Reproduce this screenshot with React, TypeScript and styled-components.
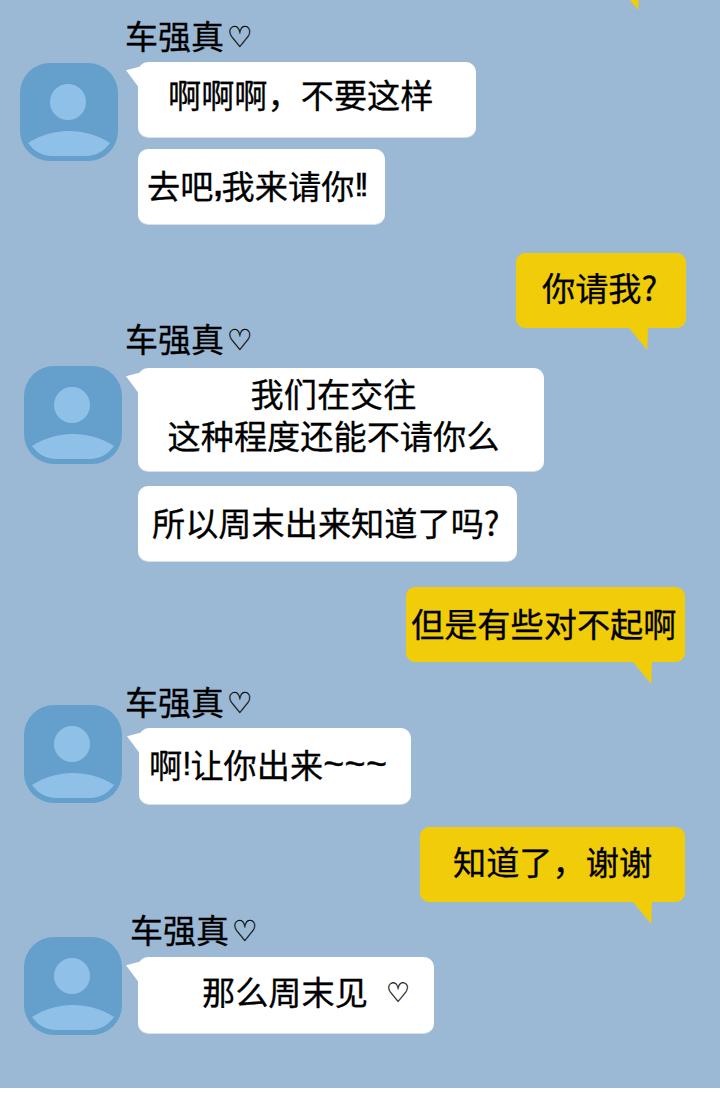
import React from "react";
import styled, { createGlobalStyle } from "styled-components";

const Global = createGlobalStyle`
  html, body { margin: 0; padding: 0; background: #ffffff; }
  body { font-family: "Noto Sans CJK SC", "Liberation Sans", sans-serif; }
`;

const Page = styled.div`
  width: 720px;
  height: 1098px;
  background: #ffffff;
`;

const Chat = styled.main`
  height: 1088px;
  background: #9bb9d4;
  overflow: hidden;
  display: flex;
  flex-direction: column;
  color: #000000;
  -webkit-text-stroke: 0.3px #000000;
`;

const Outgoing = styled.div<{ $top: number; $right: number }>`
  display: flex;
  justify-content: flex-end;
  margin-top: ${(p) => p.$top}px;
  padding-right: ${(p) => p.$right}px;
`;

const YellowBubble = styled.div<{ $w: number; $pad: number; $tail: number; $lift?: number }>`
  position: relative;
  box-sizing: border-box;
  width: ${(p) => p.$w}px;
  height: 75px;
  padding-left: ${(p) => p.$pad}px;
  padding-bottom: ${(p) => (p.$lift ?? 0) * 2}px;
  display: flex;
  align-items: center;
  background: #f0cd08;
  border-radius: 9px;
  font-size: 33.2px;
  line-height: 1;
  white-space: nowrap;
  &::after {
    content: "";
    position: absolute;
    top: 100%;
    right: ${(p) => p.$tail}px;
    width: 19px;
    height: 22px;
    background: #f0cd08;
    clip-path: polygon(0 0, 100% 0, 96% 100%);
  }
`;

const Name = styled.div<{ $top: number; $left: number }>`
  margin-top: ${(p) => p.$top}px;
  padding-left: ${(p) => p.$left}px;
  height: 32px;
  display: flex;
  align-items: center;
  font-size: 33px;
  line-height: 32px;
  white-space: nowrap;
`;

const Heart = styled.span`
  font-family: "DejaVu Sans", sans-serif;
  font-size: 29px;
  line-height: 32px;
  margin: 3px 0 0 3px;
`;

const Body = styled.div<{ $top: number; $left: number; $gap: number }>`
  display: flex;
  align-items: flex-start;
  margin-top: ${(p) => p.$top}px;
  padding-left: ${(p) => p.$left}px;
  gap: ${(p) => p.$gap}px;
`;

const AvatarFrame = styled.svg<{ $top: number }>`
  display: block;
  flex: none;
  width: 98px;
  height: 98px;
  margin-top: ${(p) => p.$top}px;
`;

const Bubbles = styled.div<{ $top: number; $gap: number }>`
  display: flex;
  flex-direction: column;
  align-items: flex-start;
  margin-top: ${(p) => p.$top}px;
  gap: ${(p) => p.$gap}px;
`;

const WhiteBubble = styled.div<{
  $w: number;
  $h?: number;
  $pad: number;
  $padRight?: number;
  $center?: boolean;
  $tail?: boolean;
  $lift?: number;
}>`
  position: relative;
  box-sizing: border-box;
  width: ${(p) => p.$w}px;
  height: ${(p) => p.$h ?? 75}px;
  padding-left: ${(p) => p.$pad}px;
  padding-right: ${(p) => p.$padRight ?? 0}px;
  padding-bottom: ${(p) => (p.$lift ?? 2) * 2}px;
  display: flex;
  flex-direction: column;
  justify-content: center;
  align-items: ${(p) => (p.$center ? "center" : "flex-start")};
  background: #ffffff;
  border-radius: 10px;
  box-shadow: 0 1px 0 #d5e0ea;
  font-size: 33.2px;
  line-height: 42px;
  white-space: nowrap;
  &::before {
    content: "";
    display: ${(p) => (p.$tail ? "block" : "none")};
    position: absolute;
    left: -12px;
    top: 3px;
    width: 20px;
    height: 24px;
    background: #ffffff;
    clip-path: polygon(0 22%, 100% 0, 70% 100%);
  }
`;

const BubbleHeart = styled.span`
  font-family: "DejaVu Sans", sans-serif;
  font-size: 27px;
  margin: 3px 0 0 18px;
`;

const TextLine = styled.span`
  display: flex;
  align-items: center;
`;

const Mark = styled.span`
  font-family: "Liberation Sans", sans-serif;
  letter-spacing: -4px;
  margin-right: 3px;
`;

const Comma = styled.span`
  font-family: "Liberation Sans", sans-serif;
  font-weight: 700;
  letter-spacing: -1px;
`;

const Tildes = styled.span`
  font-family: "Liberation Sans", sans-serif;
  font-size: 36px;
  letter-spacing: 0.4px;
`;

const Footer = styled.div`
  height: 10px;
  background: #ffffff;
`;

function Avatar({ top = 0 }: { top?: number }) {
  return (
    <AvatarFrame $top={top} viewBox="0 0 98 98" aria-hidden="true">
      <rect x="0" y="0" width="98" height="98" rx="30" ry="30" fill="#659fcc" />
      <circle cx="48" cy="39" r="18" fill="#8fc1e8" />
      <path
        d="M8 80C20 72 35 68 49 68C63 68 78 72 90 80C84 88 76 93 66 93L32 93C22 93 14 88 8 80Z"
        fill="#8fc1e8"
      />
    </AvatarFrame>
  );
}

function Sender({ top, left = 125 }: { top: number; left?: number }) {
  return (
    <Name $top={top} $left={left}>
      车强真<Heart>♡</Heart>
    </Name>
  );
}

export default function App() {
  return (
    <Page lang="zh-CN">
      <Global />
      <Chat>
        <Outgoing $top={-87} $right={34}>
          <YellowBubble $w={170} $pad={27} $tail={47} />
        </Outgoing>

        <Sender top={31} />
        <Body $top={11} $left={20} $gap={20}>
          <Avatar top={1} />
          <Bubbles $top={0} $gap={12}>
            <WhiteBubble $w={338} $pad={30} $tail $lift={6}>啊啊啊，不要这样</WhiteBubble>
            <WhiteBubble $w={247} $pad={9}>
              <TextLine>去吧<Comma>,</Comma>我来请你<Mark>!!</Mark></TextLine>
            </WhiteBubble>
          </Bubbles>
        </Body>

        <Outgoing $top={29} $right={34}>
          <YellowBubble $w={170} $pad={26} $tail={38} $lift={4}>你请我?</YellowBubble>
        </Outgoing>

        <Sender top={-6} />
        <Body $top={12} $left={24} $gap={16}>
          <Avatar />
          <Bubbles $top={2} $gap={15}>
            <WhiteBubble $w={406} $h={103} $pad={30} $padRight={45} $center $tail $lift={6}>
              <TextLine>我们在交往</TextLine>
              <TextLine>这种程度还能不请你么</TextLine>
            </WhiteBubble>
            <WhiteBubble $w={379} $pad={14}>所以周末出来知道了吗?</WhiteBubble>
          </Bubbles>
        </Body>

        <Outgoing $top={26} $right={35}>
          <YellowBubble $w={279} $pad={5} $tail={33} $lift={2}>但是有些对不起啊</YellowBubble>
        </Outgoing>

        <Sender top={23} />
        <Body $top={-12} $left={24} $gap={17}>
          <Avatar />
          <Bubbles $top={23} $gap={0}>
            <WhiteBubble $w={272} $h={76} $pad={10} $tail>
              <TextLine>啊<Mark>!</Mark>让你出来<Tildes>~~~</Tildes></TextLine>
            </WhiteBubble>
          </Bubbles>
        </Body>

        <Outgoing $top={23} $right={35}>
          <YellowBubble $w={265} $pad={33} $tail={33} $lift={4}>知道了，谢谢</YellowBubble>
        </Outgoing>

        <Sender top={11} left={130} />
        <Body $top={-8} $left={24} $gap={16}>
          <Avatar />
          <Bubbles $top={20} $gap={0}>
            <WhiteBubble $w={296} $h={76} $pad={64} $tail $lift={4}>
              <TextLine>那么周末见<BubbleHeart>♡</BubbleHeart></TextLine>
            </WhiteBubble>
          </Bubbles>
        </Body>
      </Chat>
      <Footer />
    </Page>
  );
}
